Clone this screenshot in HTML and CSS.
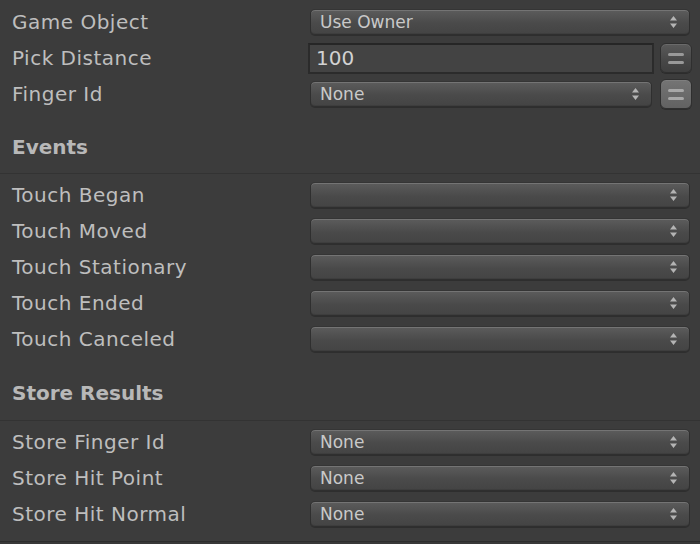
FILE: index.html
```html
<!DOCTYPE html>
<html>
<head>
<meta charset="utf-8">
<link rel="stylesheet" href="styles.css">
</head>
<body>
<div class="inspector">
  <div class="group first">
    <div class="row">
      <span class="label">Game Object</span>
      <div class="field"><div class="popup"><span class="value">Use Owner</span><svg class="arrows" width="7" height="12" viewBox="0 0 7 12"><path d="M3.5 0 L7 4.5 L0 4.5 Z M0 7.5 L7 7.5 L3.5 12 Z"/></svg></div></div>
    </div>
    <div class="row">
      <span class="label">Pick Distance</span>
      <div class="field btns"><div class="textfield">100</div><div class="eqbtn"><i></i><i></i></div></div>
    </div>
    <div class="row">
      <span class="label">Finger Id</span>
      <div class="field btns"><div class="popup"><span class="value">None</span><svg class="arrows" width="7" height="12" viewBox="0 0 7 12"><path d="M3.5 0 L7 4.5 L0 4.5 Z M0 7.5 L7 7.5 L3.5 12 Z"/></svg></div><div class="eqbtn active"><i></i><i></i></div></div>
    </div>
  </div>

  <div class="heading">Events</div>
  <div class="group">
    <div class="row"><span class="label">Touch Began</span><div class="field"><div class="popup"><span class="value"></span><svg class="arrows" width="7" height="12" viewBox="0 0 7 12"><path d="M3.5 0 L7 4.5 L0 4.5 Z M0 7.5 L7 7.5 L3.5 12 Z"/></svg></div></div></div>
    <div class="row"><span class="label">Touch Moved</span><div class="field"><div class="popup"><span class="value"></span><svg class="arrows" width="7" height="12" viewBox="0 0 7 12"><path d="M3.5 0 L7 4.5 L0 4.5 Z M0 7.5 L7 7.5 L3.5 12 Z"/></svg></div></div></div>
    <div class="row"><span class="label">Touch Stationary</span><div class="field"><div class="popup"><span class="value"></span><svg class="arrows" width="7" height="12" viewBox="0 0 7 12"><path d="M3.5 0 L7 4.5 L0 4.5 Z M0 7.5 L7 7.5 L3.5 12 Z"/></svg></div></div></div>
    <div class="row"><span class="label">Touch Ended</span><div class="field"><div class="popup"><span class="value"></span><svg class="arrows" width="7" height="12" viewBox="0 0 7 12"><path d="M3.5 0 L7 4.5 L0 4.5 Z M0 7.5 L7 7.5 L3.5 12 Z"/></svg></div></div></div>
    <div class="row"><span class="label">Touch Canceled</span><div class="field"><div class="popup"><span class="value"></span><svg class="arrows" width="7" height="12" viewBox="0 0 7 12"><path d="M3.5 0 L7 4.5 L0 4.5 Z M0 7.5 L7 7.5 L3.5 12 Z"/></svg></div></div></div>
  </div>

  <div class="heading store">Store Results</div>
  <div class="group last">
    <div class="row"><span class="label">Store Finger Id</span><div class="field"><div class="popup"><span class="value">None</span><svg class="arrows" width="7" height="12" viewBox="0 0 7 12"><path d="M3.5 0 L7 4.5 L0 4.5 Z M0 7.5 L7 7.5 L3.5 12 Z"/></svg></div></div></div>
    <div class="row"><span class="label">Store Hit Point</span><div class="field"><div class="popup"><span class="value">None</span><svg class="arrows" width="7" height="12" viewBox="0 0 7 12"><path d="M3.5 0 L7 4.5 L0 4.5 Z M0 7.5 L7 7.5 L3.5 12 Z"/></svg></div></div></div>
    <div class="row"><span class="label">Store Hit Normal</span><div class="field"><div class="popup"><span class="value">None</span><svg class="arrows" width="7" height="12" viewBox="0 0 7 12"><path d="M3.5 0 L7 4.5 L0 4.5 Z M0 7.5 L7 7.5 L3.5 12 Z"/></svg></div></div></div>
  </div>
  <div class="footer"></div>
</div>
</body>
</html>
```

FILE: styles.css
```css
html, body {
  margin: 0;
  padding: 0;
  background: #3c3c3c;
}
body {
  font-family: "DejaVu Sans", "Liberation Sans", sans-serif;
  color: #bcbcbc;
  height: 544px;
  overflow: hidden;
}
.inspector {
  display: flex;
  flex-direction: column;
}
.group {
  display: flex;
  flex-direction: column;
  padding-top: 3px;
}
.group.first {
  padding-top: 4px;
}
.group.last {
  padding-bottom: 9px;
}
.row {
  height: 36px;
  display: flex;
  align-items: center;
  padding: 0 8px 0 12px;
}
.label {
  width: 298px;
  flex: none;
  font-size: 20px;
  line-height: 24px;
  letter-spacing: 0.5px;
  color: #bebebe;
  white-space: nowrap;
  margin-top: -1px;
}
.field {
  flex: 1;
  display: flex;
  align-items: center;
  gap: 8px;
  padding-right: 2px;
}
.field.btns {
  padding-right: 0;
}
.popup {
  flex: 1;
  height: 26px;
  box-sizing: border-box;
  border-radius: 5px;
  border: 1px solid #2f2f2f;
  border-top-color: #353535;
  background: linear-gradient(#5c5c5c, #4a4a4a 55%, #444444);
  box-shadow: inset 0 1px 0 #747474, inset 0 -1px 0 #3e3e3e, 0 1px 0 #2e2e2e;
  display: flex;
  align-items: center;
  padding: 0 12px 0 9px;
}
.value {
  flex: 1;
  font-size: 17px;
  color: #c9c9c9;
  line-height: 20px;
}
.arrows {
  flex: none;
  fill: #b4b4b4;
}
.textfield {
  flex: 1;
  margin: 0 -2px;
  height: 31px;
  box-sizing: border-box;
  border: 2px solid #2b2b2b;
  border-top-color: #262626;
  background: #434343;
  font-size: 20px;
  line-height: 26px;
  padding-left: 6px;
  color: #d2d2d2;
}
.eqbtn {
  flex: none;
  width: 32px;
  height: 30px;
  box-sizing: border-box;
  border-radius: 6px;
  border: 1px solid #2f2f2f;
  background: linear-gradient(#5a5a5a, #474747 60%, #3f3f3f);
  box-shadow: inset 0 1px 0 #6a6a6a, 0 1px 0 #2c2c2c;
  display: flex;
  flex-direction: column;
  align-items: center;
  justify-content: center;
  gap: 5px;
}
.eqbtn i {
  display: block;
  width: 16px;
  height: 3px;
  border-radius: 2px;
  background: #999999;
}
.eqbtn.active {
  background: linear-gradient(#747474, #696969 60%, #626262);
  box-shadow: inset 0 1px 0 #7e7e7e, 0 1px 0 #2c2c2c;
}
.eqbtn.active i {
  background: #a8a8a8;
}
.heading {
  padding: 24px 0 15px 12px;
  height: 22px;
  line-height: 22px;
  font-size: 20px;
  font-weight: bold;
  color: #b8b8b8;
  border-bottom: 1px solid #333333;
}
.heading.store {
  padding-top: 25px;
  padding-bottom: 16px;
}
.footer {
  border-top: 1px solid #2c2c2c;
  height: 3px;
  background: #383838;
}
```
